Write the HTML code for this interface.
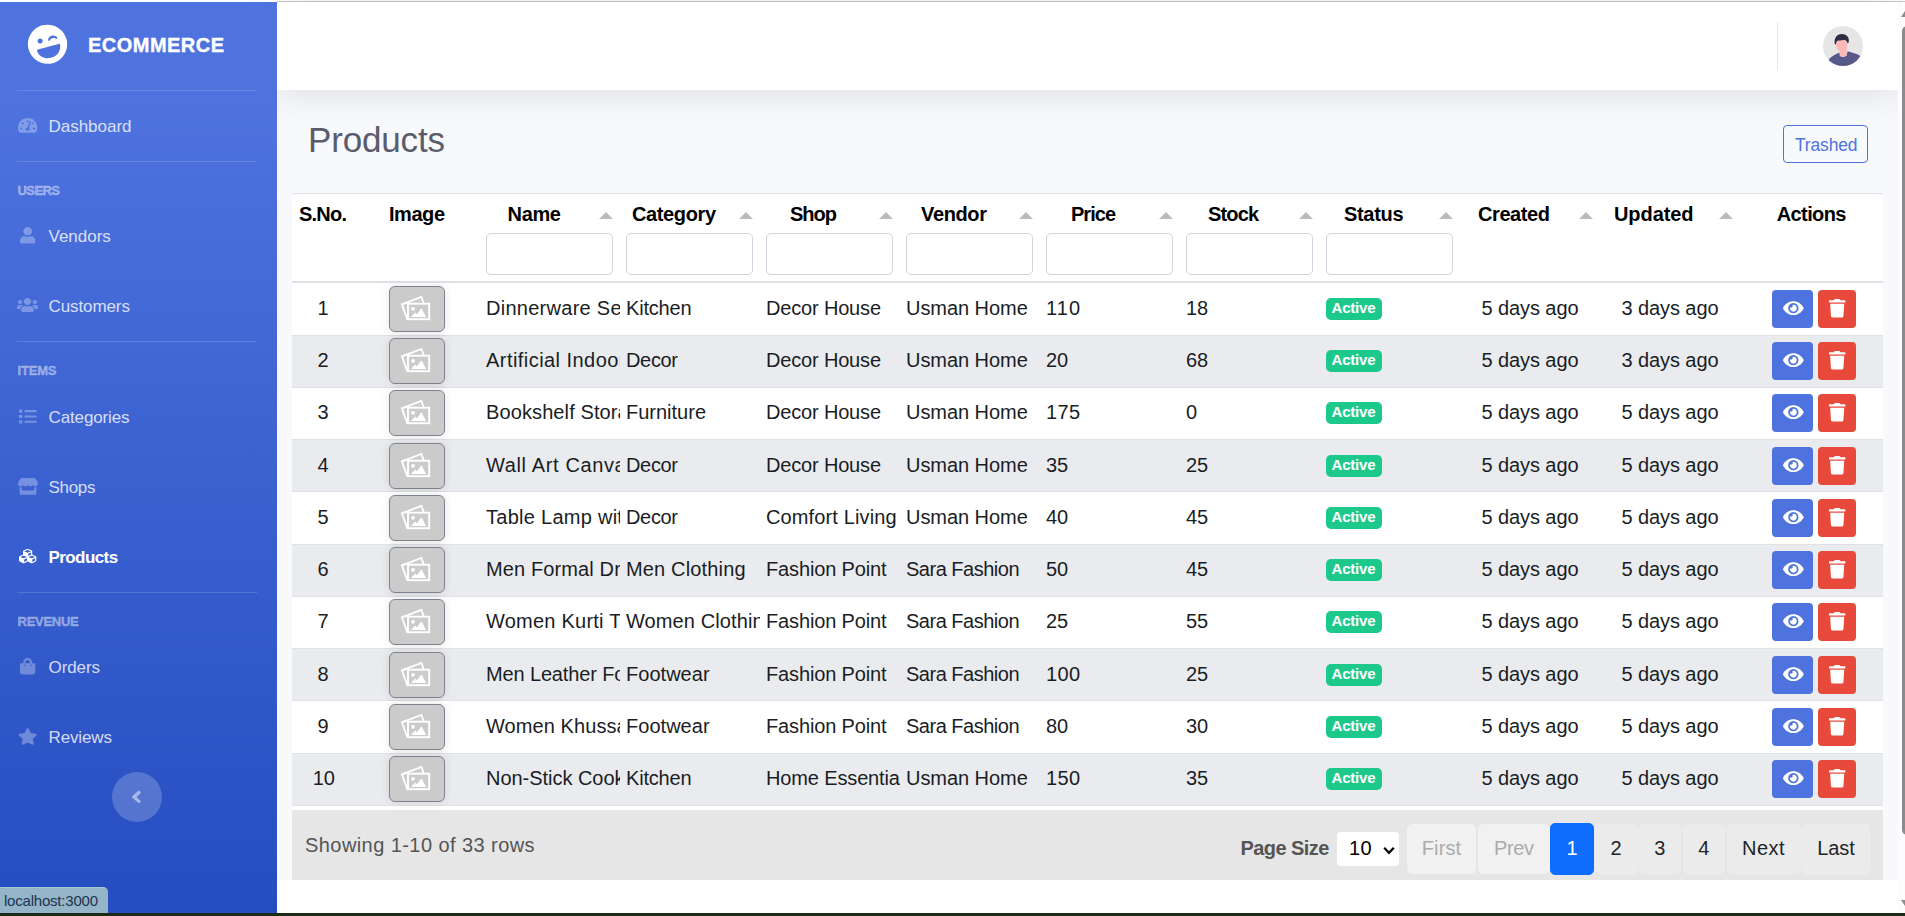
<!DOCTYPE html><html lang="en"><head><meta charset="utf-8"><title>Ecommerce - Products</title>
<meta name="viewport" content="width=1905">
<style>
*{box-sizing:border-box}
html,body{margin:0;padding:0}
body{width:1905px;height:916px;overflow:hidden;position:relative;background:#fff;
 font-family:"Liberation Sans",sans-serif;color:#1a1d24;font-size:20px;line-height:1}
.t{position:absolute;white-space:nowrap;line-height:1;display:block;margin:0;padding:0;text-decoration:none}
.ic{position:absolute;display:block;overflow:visible}
a{text-decoration:none;color:inherit}
ul{list-style:none;margin:0;padding:0}
#chrome-top{position:absolute;left:277px;top:1px;width:1628px;height:1px;background:#c9c9c9}
#chrome-bottom{position:absolute;left:0;top:913px;width:1905px;height:3px;background:#1c2a18}
#sidebar{position:absolute;left:0;top:2px;width:277px;height:911px;overflow:hidden;z-index:4;
 background:linear-gradient(180deg,#4e73df 0,#4e73df 98px,#224abe 980px)}
#sidebar hr{position:absolute;left:17px;width:240px;height:1px;border:0;margin:0;background:rgba(255,255,255,.15)}
#sidebar .nav-item{position:absolute;left:0;width:277px;height:70px}
#sidebar .t{color:rgba(255,255,255,.8)}
#sidebar .heading{color:rgba(255,255,255,.42);-webkit-text-stroke:.4px rgba(255,255,255,.42)}
#sidebar .active .t{color:#fff}
#toggle{position:absolute;left:112px;top:770px;width:50px;height:50px;border-radius:50%;background:rgba(255,255,255,.2);border:0;padding:0}
#topbar{position:absolute;left:277px;top:2px;width:1621px;height:88px;background:#fff;
 box-shadow:0 3px 35px 0 rgba(58,59,69,.15);z-index:3}
#topbar .divider{position:absolute;left:1500px;top:20px;width:1px;height:48px;background:#e3e6f0}
#content{position:absolute;left:277px;top:90px;width:1621px;height:790px;background:#f8f9fc;overflow:hidden;z-index:1}
#pagefoot{position:absolute;left:277px;top:880px;width:1621px;height:33px;background:#fff}
#vscroll{position:absolute;left:1898px;top:2px;width:7px;height:911px;background:#fcfcfc;z-index:5}
#vscroll .sthumb{position:absolute;left:4px;top:23.500px;width:10px;height:809px;border-radius:5px;background:#8b8b8b}
#status{position:absolute;left:0;top:887px;width:108px;height:26px;background:#94b4c7;border-top:1px solid #a9c4d3;
 border-top-right-radius:5px;z-index:9;font-family:"Liberation Sans","DejaVu Sans",sans-serif}
h1{margin:0;font-weight:400}
.btn-trashed{position:absolute;left:1506px;top:35px;width:85px;height:38px;border:1px solid #4e73df;border-radius:4px;color:#4e73df;background:transparent}
/* tabulator-like table */
.tabulator{position:absolute;left:15px;top:103px;width:1591px;height:687px;background:#fff;border-top:1px solid #dee2e6}
.tabulator-header{position:absolute;left:0;top:0;width:1591px;height:89px;border-bottom:2px solid #dee2e6;background:#fff;font-weight:700}
.tabulator-col{position:absolute;top:0;height:87px}
.tabulator-col input{position:absolute;left:6px;top:39px;width:127px;height:42px;border:1px solid #ced4da;border-radius:5px;background:#fff;padding:0;margin:0;outline:0}
.arrow{position:absolute;left:119px;top:18px;width:0;height:0;border-left:7px solid transparent;border-right:7px solid transparent;border-bottom:7px solid #bbb}
.tabulator-row{position:absolute;left:0;width:1591px;border-bottom:1px solid #dfe1e4;background:#fff}
.tabulator-row.even{background:#e9ebee}
.tabulator-cell{position:absolute;top:0;overflow:hidden}
.thumb{position:absolute;left:35px;top:3px;width:56px;height:46px;border:1px solid #80838f;border-radius:6px;background:#cbcbcb;
 box-shadow:0 0 10px rgba(0,0,0,.11)}
.badge{position:absolute;left:6px;top:14px;width:56px;height:22px;border-radius:5px;background:#1cc88a;color:#fff;font-weight:700}
.btn{position:absolute;top:6px;height:38px;border-radius:4px;border:0;padding:0}
.btn-view{left:32px;width:41px;background:#4e73df}
.btn-del{left:78px;width:38px;background:#e74a3b}
.tabulator-footer{position:absolute;left:0;top:616px;width:1591px;height:70px;background:#e6e6e6;color:#555}
.pg{position:absolute;top:14px;height:50px;border:1px solid #ededed;border-radius:5px;background:#ebebeb;color:#212529;padding:0}
.pg.dis{background:#f1f1f1;border-color:#f1f1f1;color:#a9abad}
.pg.act{background:#0d6efd;border-color:#0d6efd;color:#fff;top:13px;height:52px}
.psel{position:absolute;left:1045px;top:22px;width:62px;height:34px;background:#fff;border-radius:4px;border:0}
</style></head><body>
<div id="chrome-top"></div>
<nav id="sidebar"><ul>
<li><a class="brand" href="#">
<svg class="ic" viewBox="0 0 496 512" preserveAspectRatio="none" style="left:28.3px;top:21.97px;width:39.2px;height:40.46px;fill:#fff;transform:rotate(-15deg);"><path d="M248 8C111 8 0 119 0 256s111 248 248 248 248-111 248-248S385 8 248 8zm20.1 198.1c4-25.2 34.2-42.1 59.900-42.100s55.900 16.900 59.900 42.100c1.700 11.100-11.400 18.300-19.800 10.800l-9.500-8.500c-14.800-13.200-46.200-13.200-61 0L288 217c-8.400 7.400-21.600.3-19.900-10.900zM168 160c17.700 0 32 14.300 32 32s-14.300 32-32 32-32-14.300-32-32 14.300-32 32-32zm230.900 146C390 377 329.400 432 256 432h-16c-73.400 0-134-55-142.900-126-1.200-9.500 6.300-18 15.900-18h270c9.600 0 17.100 8.400 15.900 18z"/></svg>
<span class="t" style="left:88px;top:33px;font-size:20px;font-weight:700;color:#fff;letter-spacing:0.47px;color:#fff;-webkit-text-stroke:.35px #fff;">ECOMMERCE</span>
</a></li>
<hr style="top:88px">
<li class="nav-item" style="top:89px"><a href="#"><svg class="ic" viewBox="0 0 576 512" preserveAspectRatio="none" style="left:18px;top:26.06px;width:19.3px;height:16.69px;fill:rgba(255,255,255,.3);"><path d="M288 32C128.940 32 0 160.940 0 320c0 52.800 14.250 102.260 39.060 144.800 5.610 9.620 16.300 15.200 27.440 15.200h443c11.140 0 21.830-5.580 27.440-15.200C561.750 422.260 576 372.800 576 320c0-159.060-128.940-288-288-288zm0 64c14.710 0 26.580 10.130 30.320 23.650-1.110 2.260-2.640 4.230-3.450 6.670l-9.220 27.670c-5.130 3.490-10.970 6.010-17.640 6.010-17.670 0-32-14.330-32-32S270.330 96 288 96zM96 384c-17.670 0-32-14.330-32-32s14.330-32 32-32 32 14.330 32 32-14.330 32-32 32zm48-160c-17.670 0-32-14.330-32-32s14.330-32 32-32 32 14.330 32 32-14.330 32-32 32zm246.770-72.410l-61.330 184C343.130 347.330 352 364.540 352 384c0 11.720-3.380 22.550-8.880 32H232.880c-5.500-9.450-8.880-20.280-8.880-32 0-33.940 26.500-61.430 59.900-63.590l61.340-184.010c4.170-12.560 17.730-19.450 30.360-15.170 12.570 4.190 19.350 17.790 15.170 30.360zm14.660 57.200l15.520-46.550c3.470-1.290 7.130-2.230 11.050-2.230 17.670 0 32 14.330 32 32s-14.330 32-32 32c-11.380-.01-20.890-6.280-26.570-15.220zM480 384c-17.670 0-32-14.330-32-32s14.330-32 32-32 32 14.330 32 32-14.330 32-32 32z"/></svg><span class="t" style="left:48.5px;top:27px;font-size:17px;letter-spacing:-0.02px;">Dashboard</span></a></li>
<hr style="top:159px">
<li><span class="t heading" style="left:17.5px;top:182px;font-size:13px;font-weight:700;letter-spacing:-0.57px;">USERS</span></li>
<li class="nav-item" style="top:199.2px"><a href="#"><svg class="ic" viewBox="0 0 448 512" preserveAspectRatio="none" style="left:20.2px;top:26.1px;width:15.3px;height:16.6px;fill:rgba(255,255,255,.3);"><path d="M224 256c70.700 0 128-57.300 128-128S294.700 0 224 0 96 57.300 96 128s57.300 128 128 128zm89.600 32h-16.700c-22.200 10.200-46.900 16-72.900 16s-50.600-5.800-72.900-16h-16.700C60.200 288 0 348.200 0 422.400V464c0 26.500 21.500 48 48 48h352c26.500 0 48-21.500 48-48v-41.600c0-74.200-60.200-134.400-134.400-134.400z"/></svg><span class="t" style="left:48.5px;top:27px;font-size:17px;letter-spacing:-0.01px;">Vendors</span></a></li>
<li class="nav-item" style="top:269.2px"><a href="#"><svg class="ic" viewBox="0 0 640 512" preserveAspectRatio="none" style="left:17.3px;top:26.09px;width:21px;height:16.11px;fill:rgba(255,255,255,.3);"><path d="M96 224c35.300 0 64-28.700 64-64s-28.700-64-64-64-64 28.700-64 64 28.700 64 64 64zm448 0c35.300 0 64-28.700 64-64s-28.700-64-64-64-64 28.700-64 64 28.700 64 64 64zm32 32h-64c-17.600 0-33.500 7.100-45.100 18.600 40.300 22.100 68.900 62 75.100 109.400h66c17.700 0 32-14.300 32-32v-32c0-35.300-28.700-64-64-64zm-256 0c61.900 0 112-50.100 112-112S381.900 32 320 32 208 82.100 208 144s50.100 112 112 112zm76.800 32h-8.300c-20.800 10-43.900 16-68.500 16s-47.600-6-68.500-16h-8.300C179.600 288 128 339.600 128 403.200V432c0 26.500 21.500 48 48 48h288c26.500 0 48-21.500 48-48v-28.800c0-63.600-51.600-115.200-115.200-115.200zm-223.700-13.400C161.500 263.100 145.600 256 128 256H64c-35.300 0-64 28.700-64 64v32c0 17.700 14.300 32 32 32h65.900c6.300-47.400 34.900-87.300 75.200-109.400z"/></svg><span class="t" style="left:48.5px;top:27px;font-size:17px;letter-spacing:-0.1px;">Customers</span></a></li>
<hr style="top:339px">
<li><span class="t heading" style="left:17.5px;top:362px;font-size:13px;font-weight:700;letter-spacing:-0.18px;">ITEMS</span></li>
<li class="nav-item" style="top:380px"><a href="#"><svg class="ic" viewBox="0 0 512 512" preserveAspectRatio="none" style="left:19.2px;top:26.11px;width:17.6px;height:16.98px;fill:rgba(255,255,255,.3);"><path d="M80 368H16a16 16 0 0 0-16 16v64a16 16 0 0 0 16 16h64a16 16 0 0 0 16-16v-64a16 16 0 0 0-16-16zm0-320H16A16 16 0 0 0 0 64v64a16 16 0 0 0 16 16h64a16 16 0 0 0 16-16V64a16 16 0 0 0-16-16zm0 160H16a16 16 0 0 0-16 16v64a16 16 0 0 0 16 16h64a16 16 0 0 0 16-16v-64a16 16 0 0 0-16-16zm416 176H176a16 16 0 0 0-16 16v32a16 16 0 0 0 16 16h320a16 16 0 0 0 16-16v-32a16 16 0 0 0-16-16zm0-320H176a16 16 0 0 0-16 16v32a16 16 0 0 0 16 16h320a16 16 0 0 0 16-16V80a16 16 0 0 0-16-16zm0 160H176a16 16 0 0 0-16 16v32a16 16 0 0 0 16 16h320a16 16 0 0 0 16-16v-32a16 16 0 0 0-16-16z"/></svg><span class="t" style="left:48.5px;top:27px;font-size:17px;letter-spacing:-0.13px;">Categories</span></a></li>
<li class="nav-item" style="top:450.2px"><a href="#"><svg class="ic" viewBox="0 0 616 512" preserveAspectRatio="none" style="left:17.7px;top:26.1px;width:20px;height:16.8px;fill:rgba(255,255,255,.3);"><path d="M602 118.600L537.100 15C531.300 5.700 521 0 510 0H106C95 0 84.700 5.700 78.900 15L14 118.600c-33.500 53.500-3.800 127.900 58.800 136.400 4.500.6 9.100.9 13.700.9 29.600 0 55.800-13 73.800-33.100 18 20.100 44.300 33.100 73.800 33.100 29.600 0 55.800-13 73.800-33.100 18 20.100 44.300 33.100 73.800 33.100 29.600 0 55.800-13 73.800-33.100 18.100 20.100 44.300 33.100 73.800 33.100 4.700 0 9.200-.3 13.700-.9 62.800-8.400 92.600-82.800 59-136.400zM529.500 288c-10 0-19.900-1.500-29.500-3.800V384H116v-99.800c-9.600 2.200-19.500 3.800-29.500 3.800-6 0-12.100-.4-18-1.200-5.600-.8-11.100-2.100-16.400-3.600V480c0 17.700 14.300 32 32 32h448c17.700 0 32-14.300 32-32V283.200c-5.400 1.600-10.800 2.900-16.400 3.600-6.100.8-12.100 1.200-18.200 1.200z"/></svg><span class="t" style="left:48.5px;top:27px;font-size:17px;letter-spacing:-0.3px;">Shops</span></a></li>
<li class="nav-item active" style="top:520px"><a href="#"><svg class="ic" viewBox="0 0 512 512" preserveAspectRatio="none" style="left:19.2px;top:26.28px;width:17.3px;height:16.34px;fill:#fff;"><path d="M488.600 250.200L392 214V105.500c0-15-9.300-28.400-23.400-33.700l-100-37.500c-8.100-3.100-17.100-3.100-25.300 0l-100 37.500c-14.100 5.300-23.400 18.700-23.400 33.700V214l-96.600 36.200C9.300 255.500 0 268.900 0 283.900V394c0 13.600 7.700 26.100 19.900 32.200l100 50c10.100 5.100 22.100 5.100 32.200 0l103.900-52 103.900 52c10.100 5.100 22.100 5.100 32.200 0l100-50c12.200-6.100 19.900-18.600 19.900-32.200V283.900c0-15-9.300-28.400-23.400-33.700zM358 214.800l-85 31.900v-68.200l85-37v73.300zM154 104.100l102-38.200 102 38.200v.6l-102 41.400-102-41.400v-.6zm84 291.100l-85 42.500v-79.100l85-38.800v75.400zm0-112l-102 41.400-102-41.400v-.6l102-38.200 102 38.200v.6zm240 112l-85 42.500v-79.100l85-38.800v75.400zm0-112l-102 41.400-102-41.400v-.6l102-38.200 102 38.200v.6z"/></svg><span class="t" style="left:48.5px;top:27px;font-size:17px;font-weight:700;letter-spacing:-0.58px;">Products</span></a></li>
<hr style="top:590px">
<li><span class="t heading" style="left:17.5px;top:613px;font-size:13px;font-weight:700;letter-spacing:-0.26px;">REVENUE</span></li>
<li class="nav-item" style="top:630.3px"><a href="#"><svg class="ic" viewBox="0 0 448 512" preserveAspectRatio="none" style="left:20.2px;top:26px;width:15.3px;height:16.6px;fill:rgba(255,255,255,.3);"><path d="M352 160v-32C352 57.420 294.579 0 224 0 153.420 0 96 57.420 96 128v32H0v272c0 44.183 35.817 80 80 80h288c44.183 0 80-35.817 80-80V160h-96zm-192-32c0-35.290 28.710-64 64-64s64 28.710 64 64v32H160v-32zm160 120c-13.255 0-24-10.745-24-24s10.745-24 24-24 24 10.745 24 24-10.745 24-24 24zm-192 0c-13.255 0-24-10.745-24-24s10.745-24 24-24 24 10.745 24 24-10.745 24-24 24z"/></svg><span class="t" style="left:48.5px;top:27px;font-size:17px;letter-spacing:-0.09px;">Orders</span></a></li>
<li class="nav-item" style="top:700.2px"><a href="#"><svg class="ic" viewBox="0 0 576 512" preserveAspectRatio="none" style="left:18.02px;top:26.1px;width:19.45px;height:16.8px;fill:rgba(255,255,255,.3);"><path d="M259.300 17.800L194 150.200 47.900 171.500c-26.200 3.800-36.700 36.100-17.700 54.600l105.700 103-25 145.500c-4.500 26.300 23.200 46 46.400 33.700L288 439.600l130.700 68.700c23.200 12.200 50.900-7.400 46.400-33.700l-25-145.500 105.700-103c19-18.500 8.500-50.800-17.700-54.600L382 150.200 316.700 17.800c-11.700-23.600-45.600-23.900-57.400 0z"/></svg><span class="t" style="left:48.5px;top:27px;font-size:17px;letter-spacing:-0.14px;">Reviews</span></a></li>
</ul>
<button id="toggle" type="button" aria-label="Toggle sidebar"><svg class="ic" viewBox="0 0 256 512" preserveAspectRatio="none" style="left:18.85px;top:14.58px;width:10.89px;height:19.84px;fill:rgba(255,255,255,.5);"><path d="M31.700 239l136-136c9.400-9.400 24.600-9.400 33.900 0l22.600 22.600c9.400 9.400 9.400 24.600 0 33.900L127.900 256l96.400 96.400c9.400 9.400 9.400 24.600 0 33.900L201.700 409c-9.400 9.400-24.600 9.400-33.900 0l-136-136c-9.500-9.400-9.500-24.600-.1-34z"/></svg></button>
</nav>
<header id="topbar"><div class="divider"></div>
<svg class="ic" style="left:1546px;top:24px;width:40px;height:40px" viewBox="0 0 40 40"><defs><clipPath id="avc"><circle cx="20" cy="20" r="20"/></clipPath></defs><circle cx="20" cy="20" r="20" fill="#e6e6e6"/><g clip-path="url(#avc)"><path d="M4 37 L7 32 C10 30 14 27.500 16.400 26.600 L17 30 C19 31.600 22 31.200 23.600 29.600 L24.600 25.200 C29 26.400 34 28 36.600 29.400 L39 34 L34 41 L6 41 Z" fill="#575a89"/><path d="M16.300 21 L23.900 21 L23.700 29.200 C22 31 18.500 31.200 16.800 29.600 Z" fill="#ffb8b8"/><ellipse cx="18.500" cy="19.200" rx="5.600" ry="5.700" fill="#ffb8b8"/><path d="M11.700 17.800 C10.800 12 14 8 18.500 8 C23 7.800 26.600 11 25.800 15.600 C25.600 16.900 25.100 17.400 24.500 17.600 C24 15.200 23 14 21 14 C18.500 14.700 15.500 14 13.900 15.200 C13.300 16.200 13.100 17.200 12.900 18.400 Z" fill="#2f2e41"/></g></svg>
</header>
<main id="content">
<h1><span class="t" style="left:31px;top:32px;font-size:35px;color:#5a5c69;letter-spacing:-0.16px;">Products</span></h1>
<a class="btn-trashed" href="#"><span class="t" style="left:11px;top:11.25px;font-size:17.5px;color:#4e73df;letter-spacing:-0.17px;">Trashed</span></a>
<div class="tabulator" role="grid">
<div class="tabulator-header" role="row">
<div class="tabulator-col" role="columnheader" style="left:0px;width:62px">
<span class="t" style="left:7px;top:10px;font-size:20px;font-weight:700;color:#000;letter-spacing:-0.78px;">S.No.</span>
</div>
<div class="tabulator-col" role="columnheader" style="left:62px;width:126px">
<span class="t" style="left:35px;top:10px;font-size:20px;font-weight:700;color:#000;letter-spacing:-0.45px;">Image</span>
</div>
<div class="tabulator-col" role="columnheader" style="left:188px;width:140px">
<span class="t" style="left:27.6px;top:10px;font-size:20px;font-weight:700;color:#000;letter-spacing:-0.36px;">Name</span>
<div class="arrow"></div>
<input type="search" aria-label="filter Name">
</div>
<div class="tabulator-col" role="columnheader" style="left:328px;width:140px">
<span class="t" style="left:12px;top:10px;font-size:20px;font-weight:700;color:#000;letter-spacing:-0.38px;">Category</span>
<div class="arrow"></div>
<input type="search" aria-label="filter Category">
</div>
<div class="tabulator-col" role="columnheader" style="left:468px;width:140px">
<span class="t" style="left:30px;top:10px;font-size:20px;font-weight:700;color:#000;letter-spacing:-1px;">Shop</span>
<div class="arrow"></div>
<input type="search" aria-label="filter Shop">
</div>
<div class="tabulator-col" role="columnheader" style="left:608px;width:140px">
<span class="t" style="left:21px;top:10px;font-size:20px;font-weight:700;color:#000;letter-spacing:-0.36px;">Vendor</span>
<div class="arrow"></div>
<input type="search" aria-label="filter Vendor">
</div>
<div class="tabulator-col" role="columnheader" style="left:748px;width:140px">
<span class="t" style="left:31px;top:10px;font-size:20px;font-weight:700;color:#000;letter-spacing:-0.98px;">Price</span>
<div class="arrow"></div>
<input type="search" aria-label="filter Price">
</div>
<div class="tabulator-col" role="columnheader" style="left:888px;width:140px">
<span class="t" style="left:28px;top:10px;font-size:20px;font-weight:700;color:#000;letter-spacing:-0.86px;">Stock</span>
<div class="arrow"></div>
<input type="search" aria-label="filter Stock">
</div>
<div class="tabulator-col" role="columnheader" style="left:1028px;width:140px">
<span class="t" style="left:24px;top:10px;font-size:20px;font-weight:700;color:#000;letter-spacing:-0.32px;">Status</span>
<div class="arrow"></div>
<input type="search" aria-label="filter Status">
</div>
<div class="tabulator-col" role="columnheader" style="left:1168px;width:140px">
<span class="t" style="left:18px;top:10px;font-size:20px;font-weight:700;color:#000;letter-spacing:-0.41px;">Created</span>
<div class="arrow"></div>
</div>
<div class="tabulator-col" role="columnheader" style="left:1308px;width:140px">
<span class="t" style="left:14px;top:10px;font-size:20px;font-weight:700;color:#000;letter-spacing:-0.08px;">Updated</span>
<div class="arrow"></div>
</div>
<div class="tabulator-col" role="columnheader" style="left:1448px;width:143px">
<span class="t" style="left:36.7px;top:10px;font-size:20px;font-weight:700;color:#000;letter-spacing:-0.59px;">Actions</span>
</div>
</div>
<div class="tabulator-row" role="row" style="top:89px;height:53px">
<div class="tabulator-cell" role="gridcell" style="left:0px;width:62px;height:52px"><span class="t" style="left:31px;top:15px;font-size:20px;transform:translateX(-50%);">1</span></div>
<div class="tabulator-cell" role="gridcell" style="left:62px;width:126px;height:52px;overflow:visible"><div class="thumb" style="top:3px"><svg class="ic" viewBox="0 0 29 24" style="left:11px;top:8.5px;width:29px;height:24px"><path d="M6.500 6.300 L0.900 8.300 L6.200 23 L7.500 23" fill="none" stroke="#fff" stroke-width="1.800"/><path d="M1 8.300 L20.400 0.900 L22.600 7" fill="none" stroke="#fff" stroke-width="1.800"/><rect x="7" y="7.700" width="21.200" height="15.500" fill="none" stroke="#fff" stroke-width="1.900"/><circle cx="12" cy="12.800" r="1.900" fill="#fff"/><path d="M10 21 L14.200 16.500 L16 18.200 L20.400 12.300 L25.200 21 Z" fill="#fff"/></svg></div></div>
<div class="tabulator-cell" role="gridcell" style="left:188px;width:140px;height:52px"><span class="t" style="left:6px;top:15px;font-size:20px;letter-spacing:0.27px;">Dinnerware Set</span></div>
<div class="tabulator-cell" role="gridcell" style="left:328px;width:140px;height:52px"><span class="t" style="left:6px;top:15px;font-size:20px;letter-spacing:-0.18px;">Kitchen</span></div>
<div class="tabulator-cell" role="gridcell" style="left:468px;width:140px;height:52px"><span class="t" style="left:6px;top:15px;font-size:20px;letter-spacing:-0.17px;">Decor House</span></div>
<div class="tabulator-cell" role="gridcell" style="left:608px;width:140px;height:52px"><span class="t" style="left:6px;top:15px;font-size:20px;letter-spacing:-0.05px;">Usman Home</span></div>
<div class="tabulator-cell" role="gridcell" style="left:748px;width:140px;height:52px"><span class="t" style="left:6px;top:15px;font-size:20px;letter-spacing:1.06px;">110</span></div>
<div class="tabulator-cell" role="gridcell" style="left:888px;width:140px;height:52px"><span class="t" style="left:6px;top:15px;font-size:20px;letter-spacing:-0.04px;">18</span></div>
<div class="tabulator-cell" role="gridcell" style="left:1028px;width:140px;height:52px"><span class="badge" style="top:15px"><span class="t" style="left:5.5px;top:2px;font-size:15px;font-weight:700;color:#fff;letter-spacing:-0.2px;">Active</span></span></div>
<div class="tabulator-cell" role="gridcell" style="left:1168px;width:140px;height:52px"><span class="t" style="left:21.5px;top:15px;font-size:20px;letter-spacing:-0.09px;">5 days ago</span></div>
<div class="tabulator-cell" role="gridcell" style="left:1308px;width:140px;height:52px"><span class="t" style="left:21.5px;top:15px;font-size:20px;letter-spacing:-0.09px;">3 days ago</span></div>
<div class="tabulator-cell" role="gridcell" style="left:1448px;width:143px;height:52px"><button class="btn btn-view" type="button" aria-label="View" style="top:7px"><svg class="ic" viewBox="0 0 576 512" preserveAspectRatio="none" style="left:10.8px;top:9px;width:20.7px;height:18.4px;fill:#fff;"><path d="M572.520 241.400C518.290 135.590 410.930 64 288 64S57.680 135.640 3.480 241.410a32.350 32.350 0 0 0 0 29.190C57.710 376.410 165.070 448 288 448s230.320-71.640 284.520-177.410a32.350 32.350 0 0 0 0-29.190zM288 400a144 144 0 1 1 144-144 143.930 143.930 0 0 1-144 144zm0-240a95.310 95.310 0 0 0-25.310 3.790 47.850 47.850 0 0 1-66.900 66.900A95.780 95.780 0 1 0 288 160z"/></svg></button><button class="btn btn-del" type="button" aria-label="Delete" style="top:7px"><svg class="ic" viewBox="0 0 448 512" preserveAspectRatio="none" style="left:11.2px;top:9.1px;width:16.4px;height:18.6px;fill:#fff;"><path d="M432 32H312l-9.400-18.700A24 24 0 0 0 281.100 0H166.800a23.720 23.720 0 0 0-21.400 13.300L136 32H16A16 16 0 0 0 0 48v32a16 16 0 0 0 16 16h416a16 16 0 0 0 16-16V48a16 16 0 0 0-16-16zM53.200 467a48 48 0 0 0 47.900 45h245.800a48 48 0 0 0 47.900-45L416 128H32z"/></svg></button></div>
</div>
<div class="tabulator-row even" role="row" style="top:142px;height:52px">
<div class="tabulator-cell" role="gridcell" style="left:0px;width:62px;height:51px"><span class="t" style="left:31px;top:14px;font-size:20px;transform:translateX(-50%);">2</span></div>
<div class="tabulator-cell" role="gridcell" style="left:62px;width:126px;height:51px;overflow:visible"><div class="thumb" style="top:2px"><svg class="ic" viewBox="0 0 29 24" style="left:11px;top:8.5px;width:29px;height:24px"><path d="M6.500 6.300 L0.900 8.300 L6.200 23 L7.500 23" fill="none" stroke="#fff" stroke-width="1.800"/><path d="M1 8.300 L20.400 0.900 L22.600 7" fill="none" stroke="#fff" stroke-width="1.800"/><rect x="7" y="7.700" width="21.200" height="15.500" fill="none" stroke="#fff" stroke-width="1.900"/><circle cx="12" cy="12.800" r="1.900" fill="#fff"/><path d="M10 21 L14.200 16.500 L16 18.200 L20.400 12.300 L25.200 21 Z" fill="#fff"/></svg></div></div>
<div class="tabulator-cell" role="gridcell" style="left:188px;width:140px;height:51px"><span class="t" style="left:6px;top:14px;font-size:20px;letter-spacing:0.45px;">Artificial Indoor Plant</span></div>
<div class="tabulator-cell" role="gridcell" style="left:328px;width:140px;height:51px"><span class="t" style="left:6px;top:14px;font-size:20px;letter-spacing:-0.34px;">Decor</span></div>
<div class="tabulator-cell" role="gridcell" style="left:468px;width:140px;height:51px"><span class="t" style="left:6px;top:14px;font-size:20px;letter-spacing:-0.17px;">Decor House</span></div>
<div class="tabulator-cell" role="gridcell" style="left:608px;width:140px;height:51px"><span class="t" style="left:6px;top:14px;font-size:20px;letter-spacing:-0.05px;">Usman Home</span></div>
<div class="tabulator-cell" role="gridcell" style="left:748px;width:140px;height:51px"><span class="t" style="left:6px;top:14px;font-size:20px;letter-spacing:-0.04px;">20</span></div>
<div class="tabulator-cell" role="gridcell" style="left:888px;width:140px;height:51px"><span class="t" style="left:6px;top:14px;font-size:20px;letter-spacing:-0.04px;">68</span></div>
<div class="tabulator-cell" role="gridcell" style="left:1028px;width:140px;height:51px"><span class="badge" style="top:14px"><span class="t" style="left:5.5px;top:2px;font-size:15px;font-weight:700;color:#fff;letter-spacing:-0.2px;">Active</span></span></div>
<div class="tabulator-cell" role="gridcell" style="left:1168px;width:140px;height:51px"><span class="t" style="left:21.5px;top:14px;font-size:20px;letter-spacing:-0.09px;">5 days ago</span></div>
<div class="tabulator-cell" role="gridcell" style="left:1308px;width:140px;height:51px"><span class="t" style="left:21.5px;top:14px;font-size:20px;letter-spacing:-0.09px;">3 days ago</span></div>
<div class="tabulator-cell" role="gridcell" style="left:1448px;width:143px;height:51px"><button class="btn btn-view" type="button" aria-label="View" style="top:6px"><svg class="ic" viewBox="0 0 576 512" preserveAspectRatio="none" style="left:10.8px;top:9px;width:20.7px;height:18.4px;fill:#fff;"><path d="M572.520 241.400C518.290 135.590 410.930 64 288 64S57.680 135.640 3.480 241.410a32.350 32.350 0 0 0 0 29.190C57.710 376.410 165.070 448 288 448s230.320-71.640 284.520-177.410a32.350 32.350 0 0 0 0-29.190zM288 400a144 144 0 1 1 144-144 143.930 143.930 0 0 1-144 144zm0-240a95.310 95.310 0 0 0-25.310 3.790 47.850 47.850 0 0 1-66.900 66.900A95.780 95.780 0 1 0 288 160z"/></svg></button><button class="btn btn-del" type="button" aria-label="Delete" style="top:6px"><svg class="ic" viewBox="0 0 448 512" preserveAspectRatio="none" style="left:11.2px;top:9.1px;width:16.4px;height:18.6px;fill:#fff;"><path d="M432 32H312l-9.400-18.700A24 24 0 0 0 281.100 0H166.800a23.720 23.720 0 0 0-21.400 13.300L136 32H16A16 16 0 0 0 0 48v32a16 16 0 0 0 16 16h416a16 16 0 0 0 16-16V48a16 16 0 0 0-16-16zM53.200 467a48 48 0 0 0 47.900 45h245.800a48 48 0 0 0 47.900-45L416 128H32z"/></svg></button></div>
</div>
<div class="tabulator-row" role="row" style="top:194px;height:52px">
<div class="tabulator-cell" role="gridcell" style="left:0px;width:62px;height:51px"><span class="t" style="left:31px;top:14px;font-size:20px;transform:translateX(-50%);">3</span></div>
<div class="tabulator-cell" role="gridcell" style="left:62px;width:126px;height:51px;overflow:visible"><div class="thumb" style="top:2px"><svg class="ic" viewBox="0 0 29 24" style="left:11px;top:8.5px;width:29px;height:24px"><path d="M6.500 6.300 L0.900 8.300 L6.200 23 L7.500 23" fill="none" stroke="#fff" stroke-width="1.800"/><path d="M1 8.300 L20.400 0.900 L22.600 7" fill="none" stroke="#fff" stroke-width="1.800"/><rect x="7" y="7.700" width="21.200" height="15.500" fill="none" stroke="#fff" stroke-width="1.900"/><circle cx="12" cy="12.800" r="1.900" fill="#fff"/><path d="M10 21 L14.200 16.500 L16 18.200 L20.400 12.300 L25.200 21 Z" fill="#fff"/></svg></div></div>
<div class="tabulator-cell" role="gridcell" style="left:188px;width:140px;height:51px"><span class="t" style="left:6px;top:14px;font-size:20px;letter-spacing:0.11px;">Bookshelf Storage</span></div>
<div class="tabulator-cell" role="gridcell" style="left:328px;width:140px;height:51px"><span class="t" style="left:6px;top:14px;font-size:20px;">Furniture</span></div>
<div class="tabulator-cell" role="gridcell" style="left:468px;width:140px;height:51px"><span class="t" style="left:6px;top:14px;font-size:20px;letter-spacing:-0.17px;">Decor House</span></div>
<div class="tabulator-cell" role="gridcell" style="left:608px;width:140px;height:51px"><span class="t" style="left:6px;top:14px;font-size:20px;letter-spacing:-0.05px;">Usman Home</span></div>
<div class="tabulator-cell" role="gridcell" style="left:748px;width:140px;height:51px"><span class="t" style="left:6px;top:14px;font-size:20px;letter-spacing:0.32px;">175</span></div>
<div class="tabulator-cell" role="gridcell" style="left:888px;width:140px;height:51px"><span class="t" style="left:6px;top:14px;font-size:20px;">0</span></div>
<div class="tabulator-cell" role="gridcell" style="left:1028px;width:140px;height:51px"><span class="badge" style="top:14px"><span class="t" style="left:5.5px;top:2px;font-size:15px;font-weight:700;color:#fff;letter-spacing:-0.2px;">Active</span></span></div>
<div class="tabulator-cell" role="gridcell" style="left:1168px;width:140px;height:51px"><span class="t" style="left:21.5px;top:14px;font-size:20px;letter-spacing:-0.09px;">5 days ago</span></div>
<div class="tabulator-cell" role="gridcell" style="left:1308px;width:140px;height:51px"><span class="t" style="left:21.5px;top:14px;font-size:20px;letter-spacing:-0.09px;">5 days ago</span></div>
<div class="tabulator-cell" role="gridcell" style="left:1448px;width:143px;height:51px"><button class="btn btn-view" type="button" aria-label="View" style="top:6px"><svg class="ic" viewBox="0 0 576 512" preserveAspectRatio="none" style="left:10.8px;top:9px;width:20.7px;height:18.4px;fill:#fff;"><path d="M572.520 241.400C518.290 135.590 410.930 64 288 64S57.680 135.640 3.480 241.410a32.350 32.350 0 0 0 0 29.190C57.710 376.410 165.070 448 288 448s230.320-71.640 284.520-177.410a32.350 32.350 0 0 0 0-29.190zM288 400a144 144 0 1 1 144-144 143.930 143.930 0 0 1-144 144zm0-240a95.310 95.310 0 0 0-25.310 3.790 47.850 47.850 0 0 1-66.900 66.900A95.780 95.780 0 1 0 288 160z"/></svg></button><button class="btn btn-del" type="button" aria-label="Delete" style="top:6px"><svg class="ic" viewBox="0 0 448 512" preserveAspectRatio="none" style="left:11.2px;top:9.1px;width:16.4px;height:18.6px;fill:#fff;"><path d="M432 32H312l-9.400-18.700A24 24 0 0 0 281.100 0H166.800a23.720 23.720 0 0 0-21.400 13.300L136 32H16A16 16 0 0 0 0 48v32a16 16 0 0 0 16 16h416a16 16 0 0 0 16-16V48a16 16 0 0 0-16-16zM53.200 467a48 48 0 0 0 47.900 45h245.800a48 48 0 0 0 47.900-45L416 128H32z"/></svg></button></div>
</div>
<div class="tabulator-row even" role="row" style="top:246px;height:52px">
<div class="tabulator-cell" role="gridcell" style="left:0px;width:62px;height:51px"><span class="t" style="left:31px;top:15px;font-size:20px;transform:translateX(-50%);">4</span></div>
<div class="tabulator-cell" role="gridcell" style="left:62px;width:126px;height:51px;overflow:visible"><div class="thumb" style="top:3px"><svg class="ic" viewBox="0 0 29 24" style="left:11px;top:8.5px;width:29px;height:24px"><path d="M6.500 6.300 L0.900 8.300 L6.200 23 L7.500 23" fill="none" stroke="#fff" stroke-width="1.800"/><path d="M1 8.300 L20.400 0.900 L22.600 7" fill="none" stroke="#fff" stroke-width="1.800"/><rect x="7" y="7.700" width="21.200" height="15.500" fill="none" stroke="#fff" stroke-width="1.900"/><circle cx="12" cy="12.800" r="1.900" fill="#fff"/><path d="M10 21 L14.200 16.500 L16 18.200 L20.400 12.300 L25.200 21 Z" fill="#fff"/></svg></div></div>
<div class="tabulator-cell" role="gridcell" style="left:188px;width:140px;height:51px"><span class="t" style="left:6px;top:15px;font-size:20px;letter-spacing:0.63px;">Wall Art Canvas</span></div>
<div class="tabulator-cell" role="gridcell" style="left:328px;width:140px;height:51px"><span class="t" style="left:6px;top:15px;font-size:20px;letter-spacing:-0.34px;">Decor</span></div>
<div class="tabulator-cell" role="gridcell" style="left:468px;width:140px;height:51px"><span class="t" style="left:6px;top:15px;font-size:20px;letter-spacing:-0.17px;">Decor House</span></div>
<div class="tabulator-cell" role="gridcell" style="left:608px;width:140px;height:51px"><span class="t" style="left:6px;top:15px;font-size:20px;letter-spacing:-0.05px;">Usman Home</span></div>
<div class="tabulator-cell" role="gridcell" style="left:748px;width:140px;height:51px"><span class="t" style="left:6px;top:15px;font-size:20px;letter-spacing:-0.04px;">35</span></div>
<div class="tabulator-cell" role="gridcell" style="left:888px;width:140px;height:51px"><span class="t" style="left:6px;top:15px;font-size:20px;letter-spacing:-0.04px;">25</span></div>
<div class="tabulator-cell" role="gridcell" style="left:1028px;width:140px;height:51px"><span class="badge" style="top:15px"><span class="t" style="left:5.5px;top:2px;font-size:15px;font-weight:700;color:#fff;letter-spacing:-0.2px;">Active</span></span></div>
<div class="tabulator-cell" role="gridcell" style="left:1168px;width:140px;height:51px"><span class="t" style="left:21.5px;top:15px;font-size:20px;letter-spacing:-0.09px;">5 days ago</span></div>
<div class="tabulator-cell" role="gridcell" style="left:1308px;width:140px;height:51px"><span class="t" style="left:21.5px;top:15px;font-size:20px;letter-spacing:-0.09px;">5 days ago</span></div>
<div class="tabulator-cell" role="gridcell" style="left:1448px;width:143px;height:51px"><button class="btn btn-view" type="button" aria-label="View" style="top:7px"><svg class="ic" viewBox="0 0 576 512" preserveAspectRatio="none" style="left:10.8px;top:9px;width:20.7px;height:18.4px;fill:#fff;"><path d="M572.520 241.400C518.290 135.590 410.930 64 288 64S57.680 135.640 3.480 241.410a32.350 32.350 0 0 0 0 29.190C57.710 376.410 165.070 448 288 448s230.320-71.640 284.520-177.410a32.350 32.350 0 0 0 0-29.190zM288 400a144 144 0 1 1 144-144 143.930 143.930 0 0 1-144 144zm0-240a95.310 95.310 0 0 0-25.310 3.790 47.850 47.850 0 0 1-66.900 66.900A95.780 95.780 0 1 0 288 160z"/></svg></button><button class="btn btn-del" type="button" aria-label="Delete" style="top:7px"><svg class="ic" viewBox="0 0 448 512" preserveAspectRatio="none" style="left:11.2px;top:9.1px;width:16.4px;height:18.6px;fill:#fff;"><path d="M432 32H312l-9.400-18.700A24 24 0 0 0 281.100 0H166.800a23.720 23.720 0 0 0-21.400 13.300L136 32H16A16 16 0 0 0 0 48v32a16 16 0 0 0 16 16h416a16 16 0 0 0 16-16V48a16 16 0 0 0-16-16zM53.200 467a48 48 0 0 0 47.900 45h245.800a48 48 0 0 0 47.900-45L416 128H32z"/></svg></button></div>
</div>
<div class="tabulator-row" role="row" style="top:298px;height:53px">
<div class="tabulator-cell" role="gridcell" style="left:0px;width:62px;height:52px"><span class="t" style="left:31px;top:15px;font-size:20px;transform:translateX(-50%);">5</span></div>
<div class="tabulator-cell" role="gridcell" style="left:62px;width:126px;height:52px;overflow:visible"><div class="thumb" style="top:3px"><svg class="ic" viewBox="0 0 29 24" style="left:11px;top:8.5px;width:29px;height:24px"><path d="M6.500 6.300 L0.900 8.300 L6.200 23 L7.500 23" fill="none" stroke="#fff" stroke-width="1.800"/><path d="M1 8.300 L20.400 0.900 L22.600 7" fill="none" stroke="#fff" stroke-width="1.800"/><rect x="7" y="7.700" width="21.200" height="15.500" fill="none" stroke="#fff" stroke-width="1.900"/><circle cx="12" cy="12.800" r="1.900" fill="#fff"/><path d="M10 21 L14.200 16.500 L16 18.200 L20.400 12.300 L25.200 21 Z" fill="#fff"/></svg></div></div>
<div class="tabulator-cell" role="gridcell" style="left:188px;width:140px;height:52px"><span class="t" style="left:6px;top:15px;font-size:20px;letter-spacing:0.27px;">Table Lamp with Shade</span></div>
<div class="tabulator-cell" role="gridcell" style="left:328px;width:140px;height:52px"><span class="t" style="left:6px;top:15px;font-size:20px;letter-spacing:-0.34px;">Decor</span></div>
<div class="tabulator-cell" role="gridcell" style="left:468px;width:140px;height:52px"><span class="t" style="left:6px;top:15px;font-size:20px;letter-spacing:0.13px;">Comfort Living</span></div>
<div class="tabulator-cell" role="gridcell" style="left:608px;width:140px;height:52px"><span class="t" style="left:6px;top:15px;font-size:20px;letter-spacing:-0.05px;">Usman Home</span></div>
<div class="tabulator-cell" role="gridcell" style="left:748px;width:140px;height:52px"><span class="t" style="left:6px;top:15px;font-size:20px;letter-spacing:-0.04px;">40</span></div>
<div class="tabulator-cell" role="gridcell" style="left:888px;width:140px;height:52px"><span class="t" style="left:6px;top:15px;font-size:20px;letter-spacing:-0.04px;">45</span></div>
<div class="tabulator-cell" role="gridcell" style="left:1028px;width:140px;height:52px"><span class="badge" style="top:15px"><span class="t" style="left:5.5px;top:2px;font-size:15px;font-weight:700;color:#fff;letter-spacing:-0.2px;">Active</span></span></div>
<div class="tabulator-cell" role="gridcell" style="left:1168px;width:140px;height:52px"><span class="t" style="left:21.5px;top:15px;font-size:20px;letter-spacing:-0.09px;">5 days ago</span></div>
<div class="tabulator-cell" role="gridcell" style="left:1308px;width:140px;height:52px"><span class="t" style="left:21.5px;top:15px;font-size:20px;letter-spacing:-0.09px;">5 days ago</span></div>
<div class="tabulator-cell" role="gridcell" style="left:1448px;width:143px;height:52px"><button class="btn btn-view" type="button" aria-label="View" style="top:7px"><svg class="ic" viewBox="0 0 576 512" preserveAspectRatio="none" style="left:10.8px;top:9px;width:20.7px;height:18.4px;fill:#fff;"><path d="M572.520 241.400C518.290 135.590 410.930 64 288 64S57.680 135.640 3.480 241.410a32.350 32.350 0 0 0 0 29.190C57.710 376.410 165.070 448 288 448s230.320-71.640 284.520-177.410a32.350 32.350 0 0 0 0-29.190zM288 400a144 144 0 1 1 144-144 143.930 143.930 0 0 1-144 144zm0-240a95.310 95.310 0 0 0-25.310 3.790 47.850 47.850 0 0 1-66.900 66.900A95.780 95.780 0 1 0 288 160z"/></svg></button><button class="btn btn-del" type="button" aria-label="Delete" style="top:7px"><svg class="ic" viewBox="0 0 448 512" preserveAspectRatio="none" style="left:11.2px;top:9.1px;width:16.4px;height:18.6px;fill:#fff;"><path d="M432 32H312l-9.400-18.700A24 24 0 0 0 281.100 0H166.800a23.720 23.720 0 0 0-21.400 13.300L136 32H16A16 16 0 0 0 0 48v32a16 16 0 0 0 16 16h416a16 16 0 0 0 16-16V48a16 16 0 0 0-16-16zM53.200 467a48 48 0 0 0 47.900 45h245.800a48 48 0 0 0 47.900-45L416 128H32z"/></svg></button></div>
</div>
<div class="tabulator-row even" role="row" style="top:351px;height:52px">
<div class="tabulator-cell" role="gridcell" style="left:0px;width:62px;height:51px"><span class="t" style="left:31px;top:14px;font-size:20px;transform:translateX(-50%);">6</span></div>
<div class="tabulator-cell" role="gridcell" style="left:62px;width:126px;height:51px;overflow:visible"><div class="thumb" style="top:2px"><svg class="ic" viewBox="0 0 29 24" style="left:11px;top:8.5px;width:29px;height:24px"><path d="M6.500 6.300 L0.900 8.300 L6.200 23 L7.500 23" fill="none" stroke="#fff" stroke-width="1.800"/><path d="M1 8.300 L20.400 0.900 L22.600 7" fill="none" stroke="#fff" stroke-width="1.800"/><rect x="7" y="7.700" width="21.200" height="15.500" fill="none" stroke="#fff" stroke-width="1.900"/><circle cx="12" cy="12.800" r="1.900" fill="#fff"/><path d="M10 21 L14.200 16.500 L16 18.200 L20.400 12.300 L25.200 21 Z" fill="#fff"/></svg></div></div>
<div class="tabulator-cell" role="gridcell" style="left:188px;width:140px;height:51px"><span class="t" style="left:6px;top:14px;font-size:20px;letter-spacing:0.12px;">Men Formal Dress Shirt</span></div>
<div class="tabulator-cell" role="gridcell" style="left:328px;width:140px;height:51px"><span class="t" style="left:6px;top:14px;font-size:20px;letter-spacing:0.16px;">Men Clothing</span></div>
<div class="tabulator-cell" role="gridcell" style="left:468px;width:140px;height:51px"><span class="t" style="left:6px;top:14px;font-size:20px;letter-spacing:-0.14px;">Fashion Point</span></div>
<div class="tabulator-cell" role="gridcell" style="left:608px;width:140px;height:51px"><span class="t" style="left:6px;top:14px;font-size:20px;letter-spacing:-0.49px;">Sara Fashion</span></div>
<div class="tabulator-cell" role="gridcell" style="left:748px;width:140px;height:51px"><span class="t" style="left:6px;top:14px;font-size:20px;letter-spacing:-0.04px;">50</span></div>
<div class="tabulator-cell" role="gridcell" style="left:888px;width:140px;height:51px"><span class="t" style="left:6px;top:14px;font-size:20px;letter-spacing:-0.04px;">45</span></div>
<div class="tabulator-cell" role="gridcell" style="left:1028px;width:140px;height:51px"><span class="badge" style="top:14px"><span class="t" style="left:5.5px;top:2px;font-size:15px;font-weight:700;color:#fff;letter-spacing:-0.2px;">Active</span></span></div>
<div class="tabulator-cell" role="gridcell" style="left:1168px;width:140px;height:51px"><span class="t" style="left:21.5px;top:14px;font-size:20px;letter-spacing:-0.09px;">5 days ago</span></div>
<div class="tabulator-cell" role="gridcell" style="left:1308px;width:140px;height:51px"><span class="t" style="left:21.5px;top:14px;font-size:20px;letter-spacing:-0.09px;">5 days ago</span></div>
<div class="tabulator-cell" role="gridcell" style="left:1448px;width:143px;height:51px"><button class="btn btn-view" type="button" aria-label="View" style="top:6px"><svg class="ic" viewBox="0 0 576 512" preserveAspectRatio="none" style="left:10.8px;top:9px;width:20.7px;height:18.4px;fill:#fff;"><path d="M572.520 241.400C518.290 135.590 410.930 64 288 64S57.680 135.640 3.480 241.410a32.350 32.350 0 0 0 0 29.190C57.710 376.410 165.070 448 288 448s230.320-71.640 284.520-177.410a32.350 32.350 0 0 0 0-29.190zM288 400a144 144 0 1 1 144-144 143.930 143.930 0 0 1-144 144zm0-240a95.310 95.310 0 0 0-25.310 3.790 47.850 47.850 0 0 1-66.900 66.900A95.780 95.780 0 1 0 288 160z"/></svg></button><button class="btn btn-del" type="button" aria-label="Delete" style="top:6px"><svg class="ic" viewBox="0 0 448 512" preserveAspectRatio="none" style="left:11.2px;top:9.1px;width:16.4px;height:18.6px;fill:#fff;"><path d="M432 32H312l-9.400-18.700A24 24 0 0 0 281.100 0H166.800a23.720 23.720 0 0 0-21.400 13.300L136 32H16A16 16 0 0 0 0 48v32a16 16 0 0 0 16 16h416a16 16 0 0 0 16-16V48a16 16 0 0 0-16-16zM53.200 467a48 48 0 0 0 47.900 45h245.800a48 48 0 0 0 47.900-45L416 128H32z"/></svg></button></div>
</div>
<div class="tabulator-row" role="row" style="top:403px;height:52px">
<div class="tabulator-cell" role="gridcell" style="left:0px;width:62px;height:51px"><span class="t" style="left:31px;top:14px;font-size:20px;transform:translateX(-50%);">7</span></div>
<div class="tabulator-cell" role="gridcell" style="left:62px;width:126px;height:51px;overflow:visible"><div class="thumb" style="top:2px"><svg class="ic" viewBox="0 0 29 24" style="left:11px;top:8.5px;width:29px;height:24px"><path d="M6.500 6.300 L0.900 8.300 L6.200 23 L7.500 23" fill="none" stroke="#fff" stroke-width="1.800"/><path d="M1 8.300 L20.400 0.900 L22.600 7" fill="none" stroke="#fff" stroke-width="1.800"/><rect x="7" y="7.700" width="21.200" height="15.500" fill="none" stroke="#fff" stroke-width="1.900"/><circle cx="12" cy="12.800" r="1.900" fill="#fff"/><path d="M10 21 L14.200 16.500 L16 18.200 L20.400 12.300 L25.200 21 Z" fill="#fff"/></svg></div></div>
<div class="tabulator-cell" role="gridcell" style="left:188px;width:140px;height:51px"><span class="t" style="left:6px;top:14px;font-size:20px;letter-spacing:0.23px;">Women Kurti Top</span></div>
<div class="tabulator-cell" role="gridcell" style="left:328px;width:140px;height:51px"><span class="t" style="left:6px;top:14px;font-size:20px;letter-spacing:0.1px;">Women Clothing</span></div>
<div class="tabulator-cell" role="gridcell" style="left:468px;width:140px;height:51px"><span class="t" style="left:6px;top:14px;font-size:20px;letter-spacing:-0.14px;">Fashion Point</span></div>
<div class="tabulator-cell" role="gridcell" style="left:608px;width:140px;height:51px"><span class="t" style="left:6px;top:14px;font-size:20px;letter-spacing:-0.49px;">Sara Fashion</span></div>
<div class="tabulator-cell" role="gridcell" style="left:748px;width:140px;height:51px"><span class="t" style="left:6px;top:14px;font-size:20px;letter-spacing:-0.04px;">25</span></div>
<div class="tabulator-cell" role="gridcell" style="left:888px;width:140px;height:51px"><span class="t" style="left:6px;top:14px;font-size:20px;letter-spacing:-0.04px;">55</span></div>
<div class="tabulator-cell" role="gridcell" style="left:1028px;width:140px;height:51px"><span class="badge" style="top:14px"><span class="t" style="left:5.5px;top:2px;font-size:15px;font-weight:700;color:#fff;letter-spacing:-0.2px;">Active</span></span></div>
<div class="tabulator-cell" role="gridcell" style="left:1168px;width:140px;height:51px"><span class="t" style="left:21.5px;top:14px;font-size:20px;letter-spacing:-0.09px;">5 days ago</span></div>
<div class="tabulator-cell" role="gridcell" style="left:1308px;width:140px;height:51px"><span class="t" style="left:21.5px;top:14px;font-size:20px;letter-spacing:-0.09px;">5 days ago</span></div>
<div class="tabulator-cell" role="gridcell" style="left:1448px;width:143px;height:51px"><button class="btn btn-view" type="button" aria-label="View" style="top:6px"><svg class="ic" viewBox="0 0 576 512" preserveAspectRatio="none" style="left:10.8px;top:9px;width:20.7px;height:18.4px;fill:#fff;"><path d="M572.520 241.400C518.290 135.590 410.930 64 288 64S57.680 135.640 3.480 241.410a32.350 32.350 0 0 0 0 29.190C57.710 376.410 165.070 448 288 448s230.320-71.640 284.520-177.410a32.350 32.350 0 0 0 0-29.190zM288 400a144 144 0 1 1 144-144 143.930 143.930 0 0 1-144 144zm0-240a95.310 95.310 0 0 0-25.310 3.790 47.850 47.850 0 0 1-66.900 66.900A95.780 95.780 0 1 0 288 160z"/></svg></button><button class="btn btn-del" type="button" aria-label="Delete" style="top:6px"><svg class="ic" viewBox="0 0 448 512" preserveAspectRatio="none" style="left:11.2px;top:9.1px;width:16.4px;height:18.6px;fill:#fff;"><path d="M432 32H312l-9.400-18.700A24 24 0 0 0 281.100 0H166.800a23.720 23.720 0 0 0-21.400 13.300L136 32H16A16 16 0 0 0 0 48v32a16 16 0 0 0 16 16h416a16 16 0 0 0 16-16V48a16 16 0 0 0-16-16zM53.200 467a48 48 0 0 0 47.900 45h245.800a48 48 0 0 0 47.900-45L416 128H32z"/></svg></button></div>
</div>
<div class="tabulator-row even" role="row" style="top:455px;height:52px">
<div class="tabulator-cell" role="gridcell" style="left:0px;width:62px;height:51px"><span class="t" style="left:31px;top:15px;font-size:20px;transform:translateX(-50%);">8</span></div>
<div class="tabulator-cell" role="gridcell" style="left:62px;width:126px;height:51px;overflow:visible"><div class="thumb" style="top:3px"><svg class="ic" viewBox="0 0 29 24" style="left:11px;top:8.5px;width:29px;height:24px"><path d="M6.500 6.300 L0.900 8.300 L6.200 23 L7.500 23" fill="none" stroke="#fff" stroke-width="1.800"/><path d="M1 8.300 L20.400 0.900 L22.600 7" fill="none" stroke="#fff" stroke-width="1.800"/><rect x="7" y="7.700" width="21.200" height="15.500" fill="none" stroke="#fff" stroke-width="1.900"/><circle cx="12" cy="12.800" r="1.900" fill="#fff"/><path d="M10 21 L14.200 16.500 L16 18.200 L20.400 12.300 L25.200 21 Z" fill="#fff"/></svg></div></div>
<div class="tabulator-cell" role="gridcell" style="left:188px;width:140px;height:51px"><span class="t" style="left:6px;top:15px;font-size:20px;letter-spacing:-0.14px;">Men Leather Formal Shoes</span></div>
<div class="tabulator-cell" role="gridcell" style="left:328px;width:140px;height:51px"><span class="t" style="left:6px;top:15px;font-size:20px;letter-spacing:0.03px;">Footwear</span></div>
<div class="tabulator-cell" role="gridcell" style="left:468px;width:140px;height:51px"><span class="t" style="left:6px;top:15px;font-size:20px;letter-spacing:-0.14px;">Fashion Point</span></div>
<div class="tabulator-cell" role="gridcell" style="left:608px;width:140px;height:51px"><span class="t" style="left:6px;top:15px;font-size:20px;letter-spacing:-0.49px;">Sara Fashion</span></div>
<div class="tabulator-cell" role="gridcell" style="left:748px;width:140px;height:51px"><span class="t" style="left:6px;top:15px;font-size:20px;letter-spacing:0.32px;">100</span></div>
<div class="tabulator-cell" role="gridcell" style="left:888px;width:140px;height:51px"><span class="t" style="left:6px;top:15px;font-size:20px;letter-spacing:-0.04px;">25</span></div>
<div class="tabulator-cell" role="gridcell" style="left:1028px;width:140px;height:51px"><span class="badge" style="top:15px"><span class="t" style="left:5.5px;top:2px;font-size:15px;font-weight:700;color:#fff;letter-spacing:-0.2px;">Active</span></span></div>
<div class="tabulator-cell" role="gridcell" style="left:1168px;width:140px;height:51px"><span class="t" style="left:21.5px;top:15px;font-size:20px;letter-spacing:-0.09px;">5 days ago</span></div>
<div class="tabulator-cell" role="gridcell" style="left:1308px;width:140px;height:51px"><span class="t" style="left:21.5px;top:15px;font-size:20px;letter-spacing:-0.09px;">5 days ago</span></div>
<div class="tabulator-cell" role="gridcell" style="left:1448px;width:143px;height:51px"><button class="btn btn-view" type="button" aria-label="View" style="top:7px"><svg class="ic" viewBox="0 0 576 512" preserveAspectRatio="none" style="left:10.8px;top:9px;width:20.7px;height:18.4px;fill:#fff;"><path d="M572.520 241.400C518.290 135.590 410.930 64 288 64S57.680 135.640 3.480 241.410a32.350 32.350 0 0 0 0 29.190C57.710 376.410 165.070 448 288 448s230.320-71.640 284.520-177.410a32.350 32.350 0 0 0 0-29.190zM288 400a144 144 0 1 1 144-144 143.930 143.930 0 0 1-144 144zm0-240a95.310 95.310 0 0 0-25.310 3.790 47.850 47.850 0 0 1-66.900 66.900A95.780 95.780 0 1 0 288 160z"/></svg></button><button class="btn btn-del" type="button" aria-label="Delete" style="top:7px"><svg class="ic" viewBox="0 0 448 512" preserveAspectRatio="none" style="left:11.2px;top:9.1px;width:16.4px;height:18.6px;fill:#fff;"><path d="M432 32H312l-9.400-18.700A24 24 0 0 0 281.100 0H166.800a23.720 23.720 0 0 0-21.400 13.300L136 32H16A16 16 0 0 0 0 48v32a16 16 0 0 0 16 16h416a16 16 0 0 0 16-16V48a16 16 0 0 0-16-16zM53.200 467a48 48 0 0 0 47.900 45h245.800a48 48 0 0 0 47.900-45L416 128H32z"/></svg></button></div>
</div>
<div class="tabulator-row" role="row" style="top:507px;height:53px">
<div class="tabulator-cell" role="gridcell" style="left:0px;width:62px;height:52px"><span class="t" style="left:31px;top:15px;font-size:20px;transform:translateX(-50%);">9</span></div>
<div class="tabulator-cell" role="gridcell" style="left:62px;width:126px;height:52px;overflow:visible"><div class="thumb" style="top:3px"><svg class="ic" viewBox="0 0 29 24" style="left:11px;top:8.5px;width:29px;height:24px"><path d="M6.500 6.300 L0.900 8.300 L6.200 23 L7.500 23" fill="none" stroke="#fff" stroke-width="1.800"/><path d="M1 8.300 L20.400 0.900 L22.600 7" fill="none" stroke="#fff" stroke-width="1.800"/><rect x="7" y="7.700" width="21.200" height="15.500" fill="none" stroke="#fff" stroke-width="1.900"/><circle cx="12" cy="12.800" r="1.900" fill="#fff"/><path d="M10 21 L14.200 16.500 L16 18.200 L20.400 12.300 L25.200 21 Z" fill="#fff"/></svg></div></div>
<div class="tabulator-cell" role="gridcell" style="left:188px;width:140px;height:52px"><span class="t" style="left:6px;top:15px;font-size:20px;letter-spacing:0.08px;">Women Khussa</span></div>
<div class="tabulator-cell" role="gridcell" style="left:328px;width:140px;height:52px"><span class="t" style="left:6px;top:15px;font-size:20px;letter-spacing:0.03px;">Footwear</span></div>
<div class="tabulator-cell" role="gridcell" style="left:468px;width:140px;height:52px"><span class="t" style="left:6px;top:15px;font-size:20px;letter-spacing:-0.14px;">Fashion Point</span></div>
<div class="tabulator-cell" role="gridcell" style="left:608px;width:140px;height:52px"><span class="t" style="left:6px;top:15px;font-size:20px;letter-spacing:-0.49px;">Sara Fashion</span></div>
<div class="tabulator-cell" role="gridcell" style="left:748px;width:140px;height:52px"><span class="t" style="left:6px;top:15px;font-size:20px;letter-spacing:-0.04px;">80</span></div>
<div class="tabulator-cell" role="gridcell" style="left:888px;width:140px;height:52px"><span class="t" style="left:6px;top:15px;font-size:20px;letter-spacing:-0.04px;">30</span></div>
<div class="tabulator-cell" role="gridcell" style="left:1028px;width:140px;height:52px"><span class="badge" style="top:15px"><span class="t" style="left:5.5px;top:2px;font-size:15px;font-weight:700;color:#fff;letter-spacing:-0.2px;">Active</span></span></div>
<div class="tabulator-cell" role="gridcell" style="left:1168px;width:140px;height:52px"><span class="t" style="left:21.5px;top:15px;font-size:20px;letter-spacing:-0.09px;">5 days ago</span></div>
<div class="tabulator-cell" role="gridcell" style="left:1308px;width:140px;height:52px"><span class="t" style="left:21.5px;top:15px;font-size:20px;letter-spacing:-0.09px;">5 days ago</span></div>
<div class="tabulator-cell" role="gridcell" style="left:1448px;width:143px;height:52px"><button class="btn btn-view" type="button" aria-label="View" style="top:7px"><svg class="ic" viewBox="0 0 576 512" preserveAspectRatio="none" style="left:10.8px;top:9px;width:20.7px;height:18.4px;fill:#fff;"><path d="M572.520 241.400C518.290 135.590 410.930 64 288 64S57.680 135.640 3.480 241.410a32.350 32.350 0 0 0 0 29.190C57.710 376.410 165.070 448 288 448s230.320-71.640 284.520-177.410a32.350 32.350 0 0 0 0-29.190zM288 400a144 144 0 1 1 144-144 143.930 143.930 0 0 1-144 144zm0-240a95.310 95.310 0 0 0-25.310 3.790 47.850 47.850 0 0 1-66.900 66.900A95.780 95.780 0 1 0 288 160z"/></svg></button><button class="btn btn-del" type="button" aria-label="Delete" style="top:7px"><svg class="ic" viewBox="0 0 448 512" preserveAspectRatio="none" style="left:11.2px;top:9.1px;width:16.4px;height:18.6px;fill:#fff;"><path d="M432 32H312l-9.400-18.700A24 24 0 0 0 281.100 0H166.800a23.720 23.720 0 0 0-21.400 13.300L136 32H16A16 16 0 0 0 0 48v32a16 16 0 0 0 16 16h416a16 16 0 0 0 16-16V48a16 16 0 0 0-16-16zM53.200 467a48 48 0 0 0 47.900 45h245.800a48 48 0 0 0 47.900-45L416 128H32z"/></svg></button></div>
</div>
<div class="tabulator-row even" role="row" style="top:560px;height:52px">
<div class="tabulator-cell" role="gridcell" style="left:0px;width:62px;height:51px"><span class="t" style="left:31.8px;top:14px;font-size:20px;letter-spacing:-0.04px;transform:translateX(-50%);">10</span></div>
<div class="tabulator-cell" role="gridcell" style="left:62px;width:126px;height:51px;overflow:visible"><div class="thumb" style="top:2px"><svg class="ic" viewBox="0 0 29 24" style="left:11px;top:8.5px;width:29px;height:24px"><path d="M6.500 6.300 L0.900 8.300 L6.200 23 L7.500 23" fill="none" stroke="#fff" stroke-width="1.800"/><path d="M1 8.300 L20.400 0.900 L22.600 7" fill="none" stroke="#fff" stroke-width="1.800"/><rect x="7" y="7.700" width="21.200" height="15.500" fill="none" stroke="#fff" stroke-width="1.900"/><circle cx="12" cy="12.800" r="1.900" fill="#fff"/><path d="M10 21 L14.200 16.500 L16 18.200 L20.400 12.300 L25.200 21 Z" fill="#fff"/></svg></div></div>
<div class="tabulator-cell" role="gridcell" style="left:188px;width:140px;height:51px"><span class="t" style="left:6px;top:14px;font-size:20px;letter-spacing:-0.03px;">Non-Stick Cookware Set</span></div>
<div class="tabulator-cell" role="gridcell" style="left:328px;width:140px;height:51px"><span class="t" style="left:6px;top:14px;font-size:20px;letter-spacing:-0.18px;">Kitchen</span></div>
<div class="tabulator-cell" role="gridcell" style="left:468px;width:140px;height:51px"><span class="t" style="left:6px;top:14px;font-size:20px;letter-spacing:-0.14px;">Home Essentials</span></div>
<div class="tabulator-cell" role="gridcell" style="left:608px;width:140px;height:51px"><span class="t" style="left:6px;top:14px;font-size:20px;letter-spacing:-0.05px;">Usman Home</span></div>
<div class="tabulator-cell" role="gridcell" style="left:748px;width:140px;height:51px"><span class="t" style="left:6px;top:14px;font-size:20px;letter-spacing:0.32px;">150</span></div>
<div class="tabulator-cell" role="gridcell" style="left:888px;width:140px;height:51px"><span class="t" style="left:6px;top:14px;font-size:20px;letter-spacing:-0.04px;">35</span></div>
<div class="tabulator-cell" role="gridcell" style="left:1028px;width:140px;height:51px"><span class="badge" style="top:14px"><span class="t" style="left:5.5px;top:2px;font-size:15px;font-weight:700;color:#fff;letter-spacing:-0.2px;">Active</span></span></div>
<div class="tabulator-cell" role="gridcell" style="left:1168px;width:140px;height:51px"><span class="t" style="left:21.5px;top:14px;font-size:20px;letter-spacing:-0.09px;">5 days ago</span></div>
<div class="tabulator-cell" role="gridcell" style="left:1308px;width:140px;height:51px"><span class="t" style="left:21.5px;top:14px;font-size:20px;letter-spacing:-0.09px;">5 days ago</span></div>
<div class="tabulator-cell" role="gridcell" style="left:1448px;width:143px;height:51px"><button class="btn btn-view" type="button" aria-label="View" style="top:6px"><svg class="ic" viewBox="0 0 576 512" preserveAspectRatio="none" style="left:10.8px;top:9px;width:20.7px;height:18.4px;fill:#fff;"><path d="M572.520 241.400C518.290 135.590 410.930 64 288 64S57.680 135.640 3.480 241.410a32.350 32.350 0 0 0 0 29.190C57.710 376.410 165.070 448 288 448s230.320-71.640 284.520-177.410a32.350 32.350 0 0 0 0-29.190zM288 400a144 144 0 1 1 144-144 143.930 143.930 0 0 1-144 144zm0-240a95.310 95.310 0 0 0-25.310 3.790 47.850 47.850 0 0 1-66.900 66.900A95.780 95.780 0 1 0 288 160z"/></svg></button><button class="btn btn-del" type="button" aria-label="Delete" style="top:6px"><svg class="ic" viewBox="0 0 448 512" preserveAspectRatio="none" style="left:11.2px;top:9.1px;width:16.4px;height:18.6px;fill:#fff;"><path d="M432 32H312l-9.400-18.700A24 24 0 0 0 281.100 0H166.800a23.720 23.720 0 0 0-21.400 13.300L136 32H16A16 16 0 0 0 0 48v32a16 16 0 0 0 16 16h416a16 16 0 0 0 16-16V48a16 16 0 0 0-16-16zM53.200 467a48 48 0 0 0 47.900 45h245.800a48 48 0 0 0 47.900-45L416 128H32z"/></svg></button></div>
</div>
<div class="tabulator-footer">
<span class="t" style="left:13px;top:25px;font-size:20px;color:#555;letter-spacing:0.43px;">Showing 1-10 of 33 rows</span>
<span class="t" style="left:948.4px;top:28px;font-size:20px;font-weight:700;color:#555;letter-spacing:-0.55px;">Page Size</span>
<div class="psel"><span class="t" style="left:12px;top:6px;font-size:20px;color:#000;letter-spacing:0.26px;">10</span><svg class="ic" style="left:46px;top:13.500px;width:12px;height:9px" viewBox="0 0 12 9"><path d="M1.200 1.800 L6 6.800 L10.800 1.800" fill="none" stroke="#000" stroke-width="2.200"/></svg></div>
<button type="button" class="pg dis" style="left:1115px;width:69px"><span class="t" style="left:33.5px;top:13px;font-size:20px;letter-spacing:0.16px;transform:translateX(-50%);">First</span></button>
<button type="button" class="pg dis" style="left:1186px;width:71.5px"><span class="t" style="left:34.75px;top:13px;font-size:20px;letter-spacing:-0.37px;transform:translateX(-50%);">Prev</span></button>
<button type="button" class="pg act" style="left:1258px;width:44px"><span class="t" style="left:21px;top:14px;font-size:20px;transform:translateX(-50%);">1</span></button>
<button type="button" class="pg " style="left:1302.5px;width:43px"><span class="t" style="left:20.5px;top:13px;font-size:20px;transform:translateX(-50%);">2</span></button>
<button type="button" class="pg " style="left:1346.5px;width:42.5px"><span class="t" style="left:20.25px;top:13px;font-size:20px;transform:translateX(-50%);">3</span></button>
<button type="button" class="pg " style="left:1390.5px;width:42.5px"><span class="t" style="left:20.25px;top:13px;font-size:20px;transform:translateX(-50%);">4</span></button>
<button type="button" class="pg " style="left:1434.5px;width:74px"><span class="t" style="left:36px;top:13px;font-size:20px;letter-spacing:0.46px;transform:translateX(-50%);">Next</span></button>
<button type="button" class="pg " style="left:1510px;width:68px"><span class="t" style="left:33px;top:13px;font-size:20px;letter-spacing:-0.1px;transform:translateX(-50%);">Last</span></button>
</div>
</div>
</main>
<footer id="pagefoot"></footer>
<div id="vscroll"><div class="sthumb"></div><svg class="ic" style="left:3px;top:9px;width:8px;height:6px" viewBox="0 0 8 6"><path d="M0 6 L4 0 L8 6 Z" fill="#8b8b8b"/></svg><svg class="ic" style="left:3px;top:898px;width:8px;height:6px" viewBox="0 0 8 6"><path d="M0 0 L4 6 L8 0 Z" fill="#8b8b8b"/></svg></div>
<div id="status"><span class="t" style="left:4px;top:5px;font-size:15px;color:#1b3552;letter-spacing:-0.21px;">localhost:3000</span></div>
<div id="chrome-bottom"></div>
</body></html>
